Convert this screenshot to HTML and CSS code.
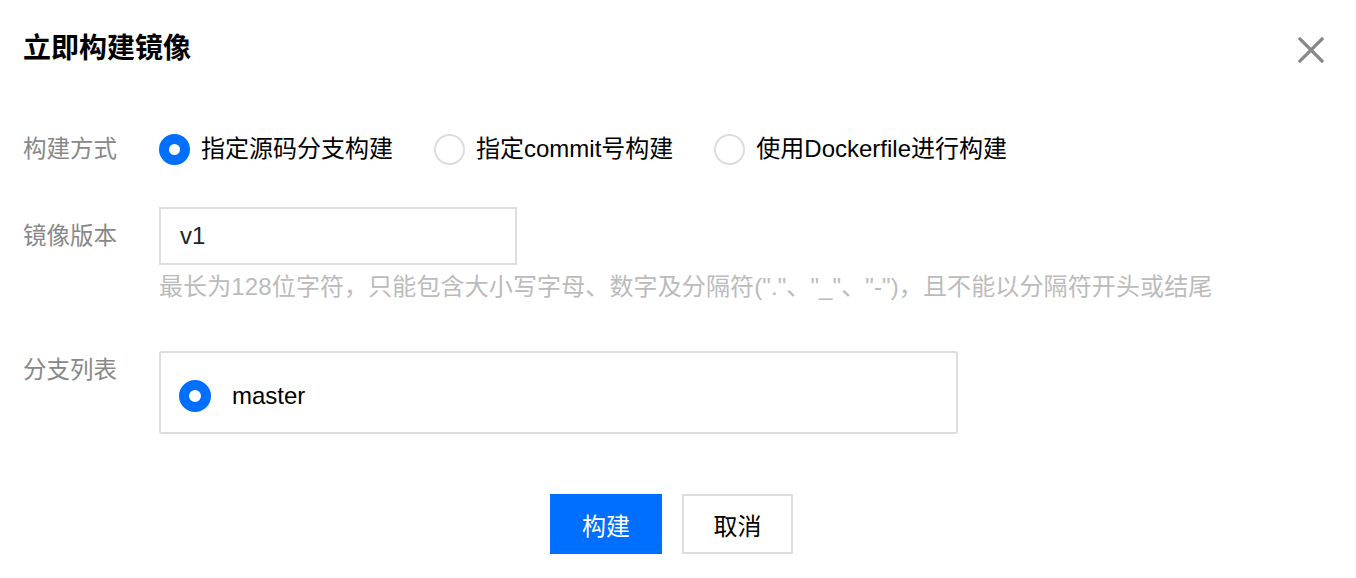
FILE: index.html
```html
<!DOCTYPE html>
<html lang="zh-CN">
<head>
<meta charset="utf-8">
<title>立即构建镜像</title>
<link rel="stylesheet" href="styles.css">
</head>
<body>
<div class="dialog">
  <div class="header">
    <h1 class="title">立即构建镜像</h1>
    <button class="close" aria-label="关闭">
      <svg width="26" height="26" viewBox="0 0 26 26"><path d="M2 2 L24 24 M24 2 L2 24" stroke="#888" stroke-width="3.2" stroke-linecap="square" fill="none"/></svg>
    </button>
  </div>
  <div class="form">
    <div class="row row-mode">
      <div class="label">构建方式</div>
      <div class="options">
        <label class="option"><span class="radio checked"></span><span class="opt-text">指定源码分支构建</span></label>
        <label class="option"><span class="radio"></span><span class="opt-text">指定commit号构建</span></label>
        <label class="option"><span class="radio"></span><span class="opt-text">使用Dockerfile进行构建</span></label>
      </div>
    </div>
    <div class="row row-version">
      <div class="label">镜像版本</div>
      <div class="input">v1</div>
    </div>
    <div class="hint">最长为128位字符，只能包含大小写字母、数字及分隔符("."、"_"、"-")，且不能以分隔符开头或结尾</div>
    <div class="row row-branch">
      <div class="label label-top">分支列表</div>
      <div class="branch-box">
        <label class="branch"><span class="radio checked big"></span><span class="branch-text">master</span></label>
      </div>
    </div>
  </div>
  <div class="footer">
    <button class="btn btn-primary">构建</button>
    <button class="btn btn-default">取消</button>
  </div>
</div>
</body>
</html>
```
FILE: styles.css
```css
html, body {
  margin: 0;
  padding: 0;
  background: #fff;
}
body {
  font-family: "Liberation Sans", "Noto Sans CJK SC", sans-serif;
  color: #000;
}
.dialog {
  width: 1356px;
  height: 578px;
  display: flex;
  flex-direction: column;
}
.header {
  height: 98px;
  display: flex;
  align-items: center;
  justify-content: space-between;
  padding: 0 32px 0 23px;
  box-sizing: border-box;
}
.title {
  margin: 0;
  font-size: 28px;
  font-weight: bold;
  line-height: 34px;
  color: #000;
}
.close {
  border: 0;
  background: none;
  padding: 0;
  width: 26px;
  height: 26px;
  margin-top: 2px;
  display: flex;
}
.form {
  padding-left: 23px;
  margin-top: 35px;
  display: flex;
  flex-direction: column;
}
.row {
  display: flex;
  align-items: center;
}
.label {
  width: 136px;
  flex: none;
  font-size: 23.5px;
  line-height: 32px;
  color: #888;
}
.options {
  display: flex;
  align-items: center;
  height: 32px;
}
.option {
  display: flex;
  align-items: center;
  margin-right: 41px;
}
.radio {
  width: 31px;
  height: 31px;
  box-sizing: border-box;
  border-radius: 50%;
  border: 2px solid #ddd;
  background: #fff;
  flex: none;
}
.radio.checked {
  border: 10px solid #006eff;
}
.radio.big {
  width: 32px;
  height: 32px;
  border-width: 10.5px;
}
.opt-text {
  margin-left: 11px;
  font-size: 24px;
  line-height: 32px;
  color: #000;
}
.row-version {
  margin-top: 42px;
}
.input {
  width: 358px;
  height: 58px;
  box-sizing: border-box;
  border: 2px solid #ddd;
  padding-left: 19px;
  display: flex;
  align-items: center;
  font-size: 24px;
  color: #222;
}
.hint {
  margin-left: 136px;
  margin-top: 6px;
  font-size: 24px;
  letter-spacing: 0.12px;
  line-height: 32px;
  color: #bbb;
  white-space: nowrap;
}
.row-branch {
  margin-top: 48px;
  align-items: flex-start;
}
.label-top {
  padding-top: 3px;
}
.branch-box {
  width: 799px;
  height: 83px;
  box-sizing: border-box;
  border: 2px solid #ddd;
  border-radius: 3px;
  padding-left: 18px;
  display: flex;
  align-items: center;
}
.branch {
  display: flex;
  align-items: center;
  margin-top: 7px;
}
.branch-text {
  margin-left: 21px;
  font-size: 24px;
  line-height: 32px;
  color: #000;
}
.footer {
  margin-top: 60px;
  display: flex;
  justify-content: center;
  gap: 20px;
  padding-right: 13px;
}
.btn {
  width: 112px;
  height: 60px;
  box-sizing: border-box;
  font-family: "Liberation Sans", "Noto Sans CJK SC", sans-serif;
  font-size: 24px;
  padding: 0;
  cursor: pointer;
}
.btn-primary {
  background: #006eff;
  color: #fff;
  border: 0;
}
.btn-default {
  width: 111px;
  background: #fff;
  color: #000;
  border: 2px solid #ddd;
}
```
